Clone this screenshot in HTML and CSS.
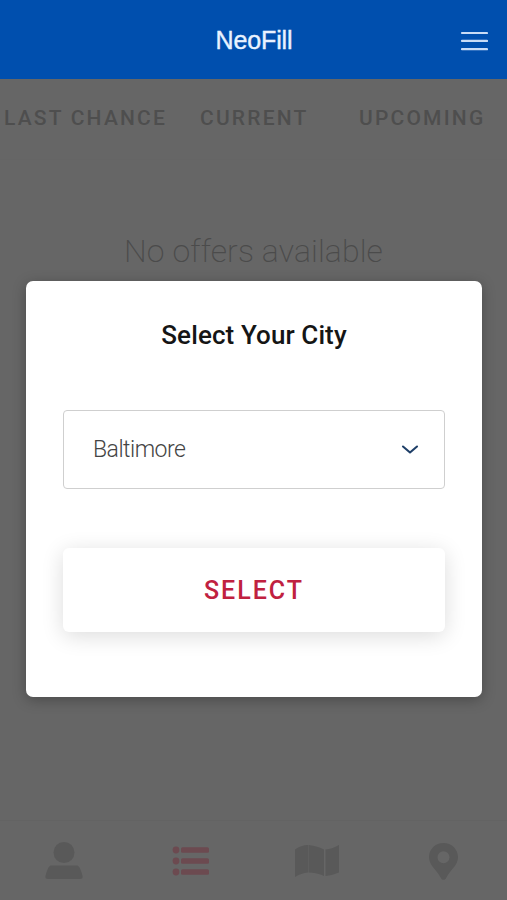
FILE: index.html
```html
<!DOCTYPE html>
<html lang="en">
<head>
<meta charset="utf-8">
<title>NeoFill</title>
<link rel="stylesheet" href="styles.css">
</head>
<body>
<div class="app">
  <header class="header">
    <h1 class="brand">NeoFill</h1>
    <button class="menu" aria-label="Menu">
      <svg width="28" height="20" viewBox="0 0 28 20"><path d="M2 2h25M2 9.900h25M2 18.200h25" fill="none" stroke="#c9dcf6" stroke-width="2.200" stroke-linecap="round"/></svg>
    </button>
  </header>
  <nav class="tabs">
    <span class="tab tab-last">LAST CHANCE</span>
    <span class="tab tab-current">CURRENT</span>
    <span class="tab tab-upcoming">UPCOMING</span>
  </nav>
  <main class="content">
    <p class="empty">No offers available</p>
  </main>
  <footer class="bottom">
    <svg class="icon" width="38" height="38" viewBox="0 0 38 38"><circle cx="19" cy="10.5" r="10.5"/><path d="M6 23.500h26c2.500 0 4.200 5.500 5.500 10.500.5 2-.5 3-2.500 3H3c-2 0-3-1-2.500-3C1.800 29 3.500 23.500 6 23.500z"/></svg>
    <svg class="icon icon-active" width="38" height="30" viewBox="0 0 38 30"><circle cx="4" cy="4" r="3.400"/><circle cx="4" cy="15" r="3.400"/><circle cx="4" cy="26" r="3.400"/><rect x="9" y="1.200" width="28" height="5.600" rx="1.500"/><rect x="9" y="12.200" width="28" height="5.600" rx="1.500"/><rect x="9" y="23.200" width="28" height="5.600" rx="1.500"/></svg>
    <svg class="icon" width="44" height="34" viewBox="0 0 44 34"><path d="M0 5.500Q6 1 13 1v27.500Q6 29 0 33zM13.500 1Q23 2 29 5.500V32Q22 28.500 13.500 28.500zM30.500 5.500Q37 5 44 1v27.500Q37 31.500 30.500 32z"/></svg>
    <svg class="icon" width="29" height="37" viewBox="0 0 29 37"><path fill-rule="evenodd" d="M14.500 0C6.500 0 0 6.200 0 14c0 8.500 7.500 12.500 11.700 20.800 1.300 2.700 4.300 2.700 5.600 0C21.500 26.500 29 22.500 29 14 29 6.200 22.500 0 14.500 0zm0 8.200a6 6 0 1 1 0 12 6 6 0 0 1 0-12z"/></svg>
  </footer>
  <div class="overlay">
    <section class="modal">
      <h2 class="title">Select Your City</h2>
      <div class="dropdown">
        <span class="city">Baltimore</span>
        <svg width="18" height="12" viewBox="0 0 18 12"><path d="M2 2.500l7 6 7-6" fill="none" stroke="#1f3f68" stroke-width="2.100" stroke-linecap="round" stroke-linejoin="round"/></svg>
      </div>
      <button class="select">SELECT</button>
    </section>
  </div>
</div>
</body>
</html>
```
FILE: styles.css
```css
* { box-sizing: border-box; }
body { margin: 0; font-family: Roboto, "Liberation Sans", sans-serif; }
button { border: 0; padding: 0; font-family: inherit; }
svg { display: block; }
.app {
  position: relative;
  display: flex;
  flex-direction: column;
  height: 900px;
  overflow: hidden;
  background: #666;
}
.header {
  display: grid;
  grid-template-columns: 1fr auto 1fr;
  align-items: center;
  height: 79px;
  padding: 2px 19px 0;
  background: #004fae;
}
.brand {
  grid-column: 2;
  margin: 0;
  padding: 0 0 1px 1px;
  color: #e9f2ff;
  font: 400 25px/30px "Liberation Sans", sans-serif;
  letter-spacing: -0.1px;
  -webkit-text-stroke: 0.4px #e9f2ff;
}
.menu { justify-self: end; background: none; }
.tabs {
  display: grid;
  grid-template-columns: 196px 160px 1fr;
  align-items: center;
  height: 81px;
  padding: 0 0 2px 4px;
  border-bottom: 1px solid #656565;
}
.tab {
  color: #4e4e4e;
  font-size: 21px;
  font-weight: 500;
  line-height: 26px;
  letter-spacing: 2.2px;
  white-space: nowrap;
}
.tab-upcoming { margin-left: -1px; }
.content { flex: 1; padding-top: 71px; text-align: center; }
.empty {
  margin: 0;
  color: #4b4b4b;
  font-size: 32px;
  font-weight: 200;
  line-height: 40px;
  letter-spacing: 0.1px;
}
.bottom {
  display: grid;
  grid-template-columns: repeat(4, 1fr);
  place-items: center;
  height: 80px;
  padding: 1px 0 0 1px;
  border-top: 1px solid #636363;
}
.icon { fill: #595959; }
.icon-active { fill: #6c4a50; }
.overlay {
  position: absolute;
  inset: 79px 0 0;
  padding: 202px 25px 0 26px;
}
.modal {
  display: flex;
  flex-direction: column;
  height: 416px;
  padding: 39px 37px 0;
  border-radius: 7px;
  background: #fff;
  box-shadow: 0 3px 14px rgba(0, 0, 0, .28);
}
.title {
  margin: 0 0 59px;
  color: #151515;
  font-size: 26px;
  font-weight: 500;
  line-height: 31px;
  letter-spacing: 0.1px;
  text-align: center;
}
.dropdown {
  display: flex;
  align-items: center;
  justify-content: space-between;
  height: 79px;
  margin-bottom: 59px;
  padding: 0 25px 0 29px;
  border: 1.500px solid #cfcfcf;
  border-radius: 4px;
}
.city {
  color: #444;
  font-size: 23px;
  font-weight: 300;
  line-height: 28px;
  letter-spacing: -0.5px;
}
.select {
  height: 84px;
  border-radius: 6px;
  background: #fff;
  box-shadow: 0 4px 22px rgba(0, 0, 0, .14);
  color: #c0213f;
  font-size: 25px;
  font-weight: 500;
  letter-spacing: 2px;
}
```
